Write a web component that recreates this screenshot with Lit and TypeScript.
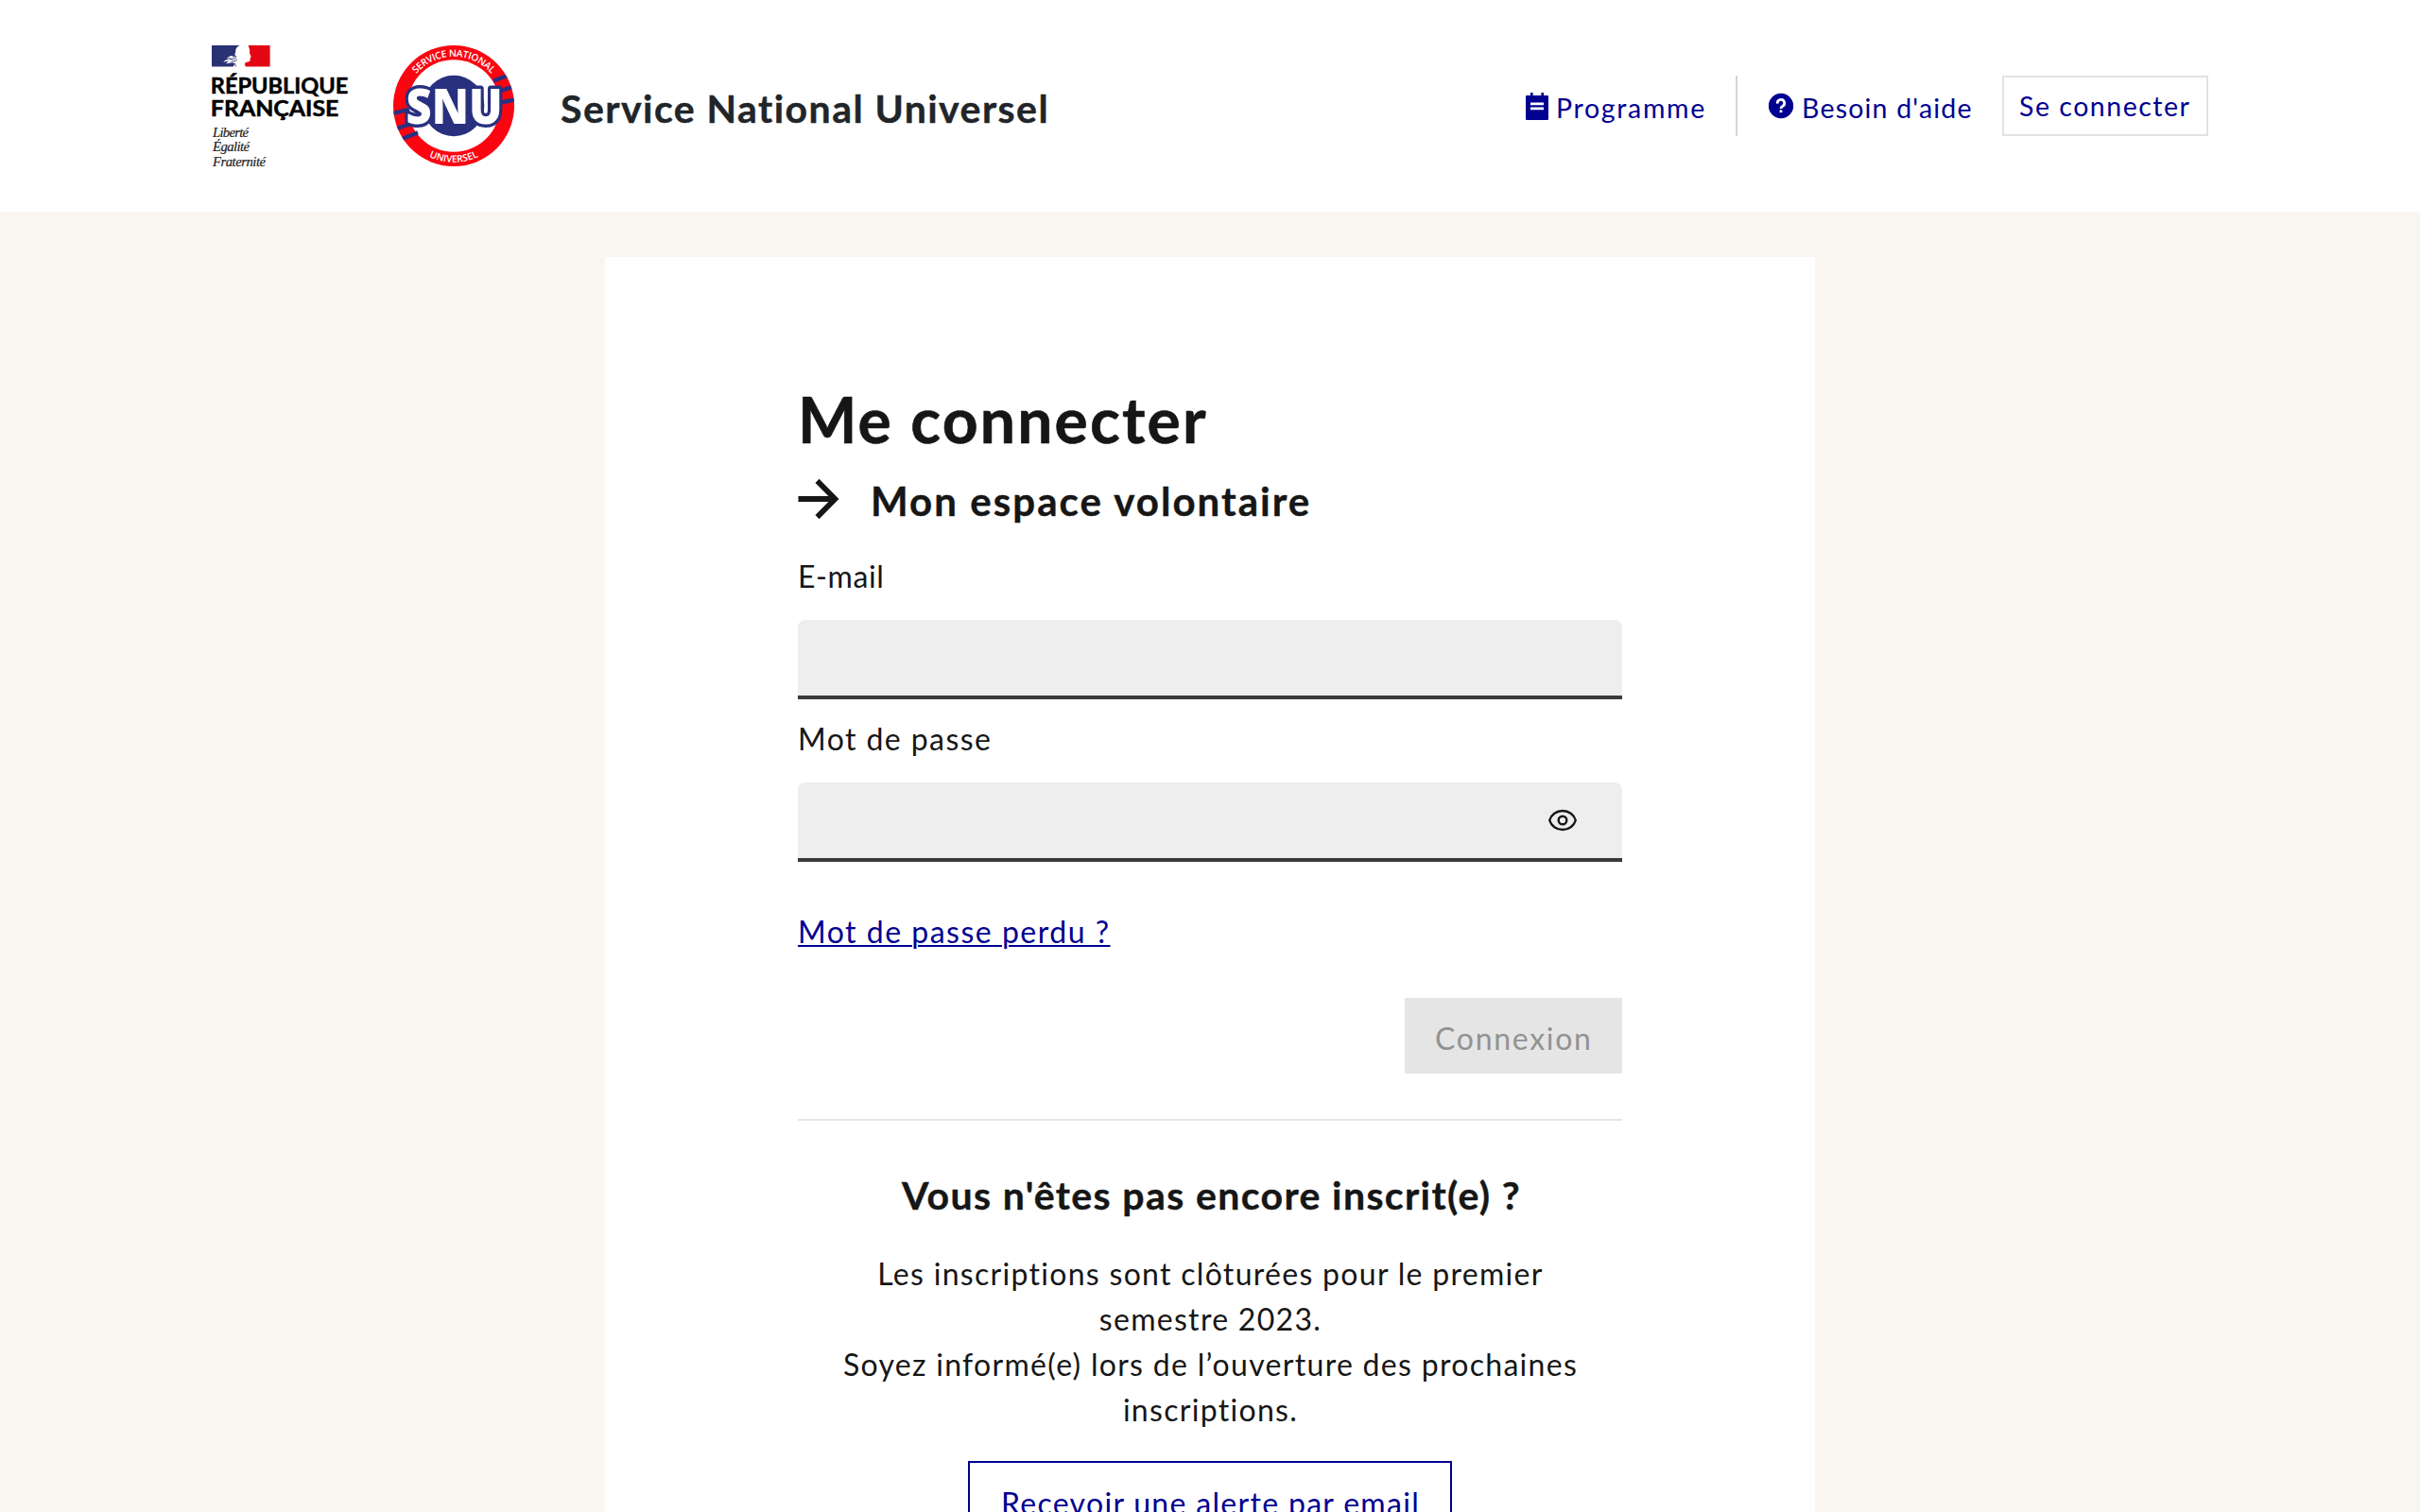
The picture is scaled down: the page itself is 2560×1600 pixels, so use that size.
import { LitElement, html, css } from "lit";
import { customElement } from "lit/decorators.js";

@customElement("republique-logo")
class RepubliqueLogo extends LitElement {
  static styles = css`
    :host { display: block; width: 146px; height: 128px; }
    svg { display: block; }
    .name { font: 700 23.6px Lato, sans-serif; fill: #000; stroke: #000; stroke-width: 0.5px; }
    .motto { font: italic 400 14.6px "Liberation Serif", serif; fill: #222; stroke: #222; stroke-width: 0.2px; }
  `;
  render() {
    return html`
      <svg width="146" height="130" viewBox="0 0 146 130" role="img" aria-label="République Française">
        <rect x="0" y="0" width="62" height="22.4" fill="#fff" />
        <path fill="#2a3273" d="M0 0H29.5C27.2 1.3 25.9 2.8 25.4 4.4C25 6 25.6 6.6 24.8 8.2C24.2 9.4 24.4 10.2 25 10.9C23.4 11.6 22 11.2 20.4 11C18.6 11.6 17.2 12.6 15.6 13.8C17.6 13.4 19.4 13.2 21 13.2C19 14.4 17 14.4 15 15.6C13.8 16.2 13 16.8 12.2 17.8C14.4 17.2 16.2 16.6 18 16.4C17 17.6 15.8 18.2 15.2 19.4C17.4 18.8 19.4 18.6 21 18.2C22.2 18 23.4 18.6 24.4 19.4L22.6 22.4H0Z" />
        <path fill="none" stroke="#2a3273" stroke-width="1" stroke-linecap="round" d="M19.5 14.8C22 14.2 24 14.4 25.5 13.2M21 17C23.5 16.8 25 16.6 26.6 15.2M22.5 11.9L25.8 11.6M24 19.6C25 19.8 25.6 20.6 25.2 22" />
        <path fill="#e30613" d="M38.6 0H61.6V22.4H36C34.8 20.8 34.8 19.2 35.8 17.9C37.4 17.6 39.2 17.6 40.2 16.8C40.8 16 40.4 15.2 40.8 14.6C40.2 14.2 40.4 13.8 41 13.5C40.8 12.9 40.9 12.5 41.7 12C41.9 11.2 40.4 9.8 40.1 8.4C39.8 7 40.4 6.2 40 4.6C39.6 2.8 39 1.2 38.6 0Z" />
        <text class="name" x="-1.2" y="50.6" textLength="145.6" lengthAdjust="spacingAndGlyphs">RÉPUBLIQUE</text>
        <text class="name" x="-1.2" y="75.2" textLength="135.6" lengthAdjust="spacingAndGlyphs">FRANÇAISE</text>
        <text class="motto" x="1" y="97" textLength="38">Liberté</text>
        <text class="motto" x="1" y="112.4" textLength="39">Égalité</text>
        <text class="motto" x="1" y="127.8" textLength="56">Fraternité</text>
      </svg>
    `;
  }
}

@customElement("snu-logo")
class SnuLogo extends LitElement {
  static styles = css`
    :host { display: block; width: 128px; height: 128px; }
    svg { display: block; }
    .ring { font: 600 10.2px "Open Sans", sans-serif; fill: #fff; }
    .word { font: 800 52px "Open Sans", sans-serif; fill: #fff; stroke: #29307f; stroke-width: 7px; stroke-linejoin: round; paint-order: stroke; }
  `;
  render() {
    return html`
      <svg width="128" height="128" viewBox="0 0 128 128" role="img" aria-label="SNU">
        <defs>
          <clipPath id="disc"><circle cx="64" cy="64" r="64" /></clipPath>
          <path id="upper" d="M11.8 64A52.200 52.200 0 0 1 116.200 64" />
          <path id="lower" d="M4.2 64A59.8 59.8 0 0 0 123.8 64" />
        </defs>
        <circle cx="64" cy="64" r="64" fill="#fb0511" />
        <circle cx="64" cy="64" r="48.8" fill="#fff" />
        <g clip-path="url(#disc)" stroke="#29307f" stroke-width="4.4" fill="none">
          <path d="M106 37.5L121 32M112 48.5L127 43.6M112 61L130 57.2" />
          <path d="M-2 72.5L17 67.6M2 88.5L24 81.4M8 99.5L26 92.4" />
        </g>
        <circle cx="64" cy="64" r="32.3" fill="#29307f" />
        <text class="word" x="13.5" y="83.4" textLength="102" lengthAdjust="spacingAndGlyphs">SNU</text>
        <text class="ring"><textPath href="#upper" startOffset="50%" text-anchor="middle" textLength="90">SERVICE NATIONAL</textPath></text>
        <text class="ring"><textPath href="#lower" startOffset="50%" text-anchor="middle" textLength="54">UNIVERSEL</textPath></text>
      </svg>
    `;
  }
}

@customElement("app-root")
class AppRoot extends LitElement {
  static styles = css`
    :host {
      display: block;
      height: 1600px;
      overflow: hidden;
      background: #f9f6f2;
      font-family: Lato, "Open Sans", sans-serif;
      font-size: 32px;
      line-height: 48px;
      color: #161616;
    }
    * { box-sizing: border-box; }
    h1, h2, h3, p { margin: 0; font-weight: 400; }
    a { color: #000091; text-decoration: none; }
    svg { display: block; flex: none; }

    .header { display: flex; align-items: center; height: 224px; padding: 0 224px; background: #fff; }
    .snu { margin-left: 46px; }
    .brand { margin-left: 49px; padding-top: 6px; font-size: 41px; font-weight: 700; letter-spacing: 1.45px; color: #212529; -webkit-text-stroke: 0.4px #212529; }
    .nav { display: flex; height: 64px; margin-left: auto; font-size: 28.5px; white-space: nowrap; }
    .link { display: flex; align-items: center; }
    .link span { padding-top: 3px; }
    .programme { width: 224px; gap: 8px; border-right: 2px solid #d1d5db; letter-spacing: 1.68px; }
    .help { width: 247px; margin-left: 33px; gap: 9px; letter-spacing: 1.2px; }
    .login { display: flex; align-items: center; width: 218px; padding: 0 0 1px 16px; border: 2px solid #e0e2e6; letter-spacing: 1.52px; }

    .card { width: 1280px; height: 1400px; margin: 48px auto 0; padding: 132px 204px 0; background: #fff; }
    .title { font-size: 66px; line-height: 80px; font-weight: 700; letter-spacing: 2.2px; -webkit-text-stroke: 0.6px #161616; }
    .subtitle { display: flex; gap: 33px; margin-top: 22px; font-size: 42px; font-weight: 700; letter-spacing: 2.05px; -webkit-text-stroke: 0.4px #161616; }
    .field { display: flex; flex-direction: column; gap: 22px; margin-top: 32px; }
    .field + .field { margin-top: 18px; }
    .email { letter-spacing: 0.6px; }
    .password { letter-spacing: 1.43px; }
    .input { display: flex; align-items: center; justify-content: flex-end; height: 84px; padding-right: 47px; background: #eee; border-bottom: 4px solid #3a3a3a; border-radius: 8px 8px 0 0; }
    .lost { margin-top: 50px; }
    .lost a { letter-spacing: 1.5px; text-decoration: underline; text-decoration-thickness: 2px; text-underline-offset: 2px; }
    .actions { display: flex; justify-content: flex-end; margin-top: 46px; }
    .submit { width: 230px; height: 80px; padding: 19px 0 0 32px; background: #e5e5e5; color: #929292; letter-spacing: 1.72px; }
    .rule { height: 2px; margin-top: 48px; background: #e5e5e5; }
    .signup { display: flex; flex-direction: column; align-items: center; text-align: center; }
    .question { margin-top: 55px; padding-left: 3px; font-size: 41px; font-weight: 700; letter-spacing: 1.38px; -webkit-text-stroke: 0.4px #161616; }
    .notice { margin-top: 35px; padding-left: 1px; letter-spacing: 1.3px; }
    .alert { width: 512px; height: 80px; margin-top: 30px; padding: 19px 0 0 1px; border: 2px solid #000091; letter-spacing: 1.31px; }
  `;

  render() {
    return html`
      <header class="header">
        <republique-logo></republique-logo>
        <snu-logo class="snu"></snu-logo>
        <div class="brand">Service National Universel</div>
        <nav class="nav">
          <a class="link programme">
            <svg width="24" height="32" viewBox="0 0 24 32">
              <path fill="#000091" d="M1 5H5V2H7.6V5H16.4V2H19V5H23Q24 5 24 6V30Q24 31 23 31H1Q0 31 0 30V6Q0 5 1 5Z" />
              <path fill="#fff" d="M5 12.6H19V15.2H5ZM5 17.6H19V20.2H5Z" />
            </svg>
            <span>Programme</span>
          </a>
          <a class="link help">
            <svg width="26" height="28" viewBox="0 0 26 28">
              <circle cx="13" cy="14" r="13.2" fill="#000091" />
              <path fill="none" stroke="#fff" stroke-width="2.8" d="M9.3 11.6A3.7 3.7 0 1 1 14.6 14.4C13.4 15 13 15.500 13 17" />
              <rect x="11.6" y="18.4" width="2.8" height="2.7" fill="#fff" />
            </svg>
            <span>Besoin d'aide</span>
          </a>
          <a class="login">Se connecter</a>
        </nav>
      </header>
      <main class="card">
        <h1 class="title">Me connecter</h1>
        <h2 class="subtitle">
          <svg width="44" height="48" viewBox="0 0 44 48">
            <path fill="none" stroke="#161616" stroke-width="5.8" d="M0.5 22H39M20.5 2.9L39.4 22L20.5 41.1" />
          </svg>
          <span>Mon espace volontaire</span>
        </h2>
        <div class="field">
          <label class="email">E-mail</label>
          <div class="input"></div>
        </div>
        <div class="field">
          <label class="password">Mot de passe</label>
          <div class="input">
            <svg width="32" height="24" viewBox="0 0 32 24">
              <path fill="none" stroke="#161616" stroke-width="2.4" stroke-linejoin="round" d="M2.2 12C4 6 9.4 2 16 2S28 6 29.8 12C28 18 22.6 22 16 22S4 18 2.2 12Z" />
              <circle cx="16" cy="12" r="4.3" fill="none" stroke="#161616" stroke-width="2.4" />
            </svg>
          </div>
        </div>
        <p class="lost"><a>Mot de passe perdu ?</a></p>
        <div class="actions"><div class="submit">Connexion</div></div>
        <div class="rule"></div>
        <section class="signup">
          <h3 class="question">Vous n'êtes pas encore inscrit(e) ?</h3>
          <p class="notice">
            Les inscriptions sont clôturées pour le premier<br />semestre 2023.<br />Soyez informé(e) lors de l’ouverture des prochaines<br />inscriptions.
          </p>
          <a class="alert">Recevoir une alerte par email</a>
        </section>
      </main>
    `;
  }
}
